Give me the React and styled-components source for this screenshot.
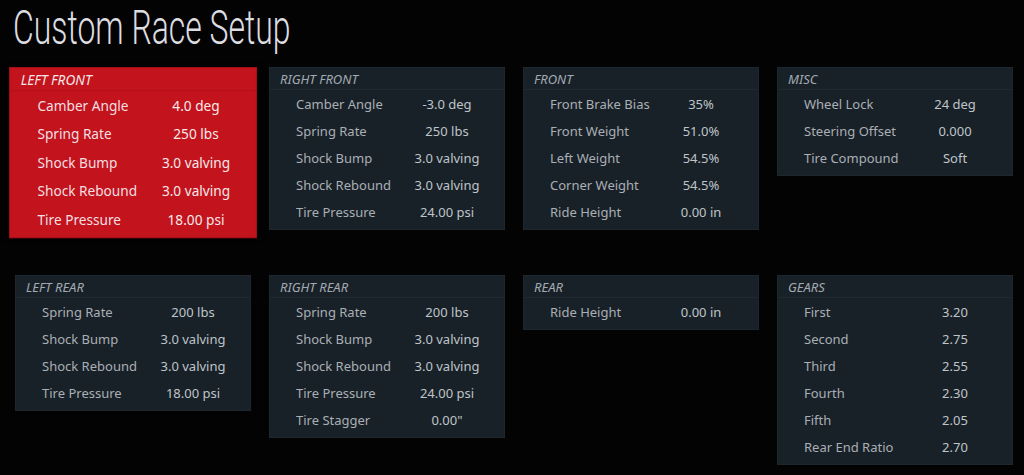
import React from "react";
import styled, { createGlobalStyle, css } from "styled-components";

const GlobalStyle = createGlobalStyle`
  html, body {
    margin: 0;
    padding: 0;
    background: #030303;
  }
  body {
    font-family: "Noto Sans", "Open Sans", sans-serif;
  }
`;

const panels = [
  {
    title: "LEFT FRONT",
    active: true,
    rows: [
      ["Camber Angle", "4.0 deg"],
      ["Spring Rate", "250 lbs"],
      ["Shock Bump", "3.0 valving"],
      ["Shock Rebound", "3.0 valving"],
      ["Tire Pressure", "18.00 psi"],
    ],
  },
  {
    title: "RIGHT FRONT",
    rows: [
      ["Camber Angle", "-3.0 deg"],
      ["Spring Rate", "250 lbs"],
      ["Shock Bump", "3.0 valving"],
      ["Shock Rebound", "3.0 valving"],
      ["Tire Pressure", "24.00 psi"],
    ],
  },
  {
    title: "FRONT",
    rows: [
      ["Front Brake Bias", "35%"],
      ["Front Weight", "51.0%"],
      ["Left Weight", "54.5%"],
      ["Corner Weight", "54.5%"],
      ["Ride Height", "0.00 in"],
    ],
  },
  {
    title: "MISC",
    rows: [
      ["Wheel Lock", "24 deg"],
      ["Steering Offset", "0.000"],
      ["Tire Compound", "Soft"],
    ],
  },
  {
    title: "LEFT REAR",
    rows: [
      ["Spring Rate", "200 lbs"],
      ["Shock Bump", "3.0 valving"],
      ["Shock Rebound", "3.0 valving"],
      ["Tire Pressure", "18.00 psi"],
    ],
  },
  {
    title: "RIGHT REAR",
    rows: [
      ["Spring Rate", "200 lbs"],
      ["Shock Bump", "3.0 valving"],
      ["Shock Rebound", "3.0 valving"],
      ["Tire Pressure", "24.00 psi"],
      ["Tire Stagger", "0.00\""],
    ],
  },
  {
    title: "REAR",
    rows: [["Ride Height", "0.00 in"]],
  },
  {
    title: "GEARS",
    rows: [
      ["First", "3.20"],
      ["Second", "2.75"],
      ["Third", "2.55"],
      ["Fourth", "2.30"],
      ["Fifth", "2.05"],
      ["Rear End Ratio", "2.70"],
    ],
  },
];

const App = () => {
  return (
    <Screen>
      <GlobalStyle />
      <Header>
        <Title>Custom Race Setup</Title>
      </Header>
      <Grid>
        {panels.map((panel) => (
          <Panel key={panel.title} $active={panel.active}>
            <PanelTitle $active={panel.active}>{panel.title}</PanelTitle>
            <Rows>
              {panel.rows.map(([label, value]) => (
                <Row key={label}>
                  <Label $active={panel.active}>{label}</Label>
                  <Value $active={panel.active}>{value}</Value>
                </Row>
              ))}
            </Rows>
          </Panel>
        ))}
      </Grid>
    </Screen>
  );
};

export default App;

const Screen = styled.div`
  width: 1024px;
  height: 475px;
  background: #030303;
  overflow: hidden;
  box-sizing: border-box;
`;

const Header = styled.div`
  height: 67px;
  padding-left: 13px;
  box-sizing: border-box;
`;

const Title = styled.h1`
  display: inline-block;
  margin: 0;
  font-family: Roboto, "Liberation Sans", sans-serif;
  font-weight: 300;
  font-size: 48px;
  line-height: 56px;
  color: #dcdde0;
  transform: scaleX(0.665);
  transform-origin: left top;
  white-space: nowrap;
`;

const Grid = styled.div`
  display: grid;
  grid-template-columns: repeat(4, 236px);
  column-gap: 18px;
  row-gap: 45px;
  align-items: start;
  padding-left: 15px;
`;

const Panel = styled.div`
  background: #192128;
  border: 1px solid #1e272e;
  box-sizing: border-box;
  padding-bottom: 4px;

  ${(p) =>
    p.$active &&
    css`
      background: #c3131d;
      border-color: #a50f18;
      transform: scale(1.05);
      transform-origin: 50% 0;
      box-shadow: 0 0 6px rgba(0, 0, 0, 0.6);
    `}
`;

const PanelTitle = styled.div`
  height: 22px;
  line-height: 22px;
  padding-left: 10px;
  font-size: 13px;
  font-style: italic;
  color: ${(p) => (p.$active ? "#f4e6e7" : "#a3aab1")};
  border-bottom: 1px solid ${(p) => (p.$active ? "#b5121c" : "#20292f")};
  box-sizing: border-box;
`;

const Rows = styled.div`
  display: flex;
  flex-direction: column;
`;

const Row = styled.div`
  display: grid;
  grid-template-columns: 26px 100px 102px;
  height: 27px;
  align-items: center;
  font-size: 13px;

  &::before {
    content: "";
  }
`;

const Label = styled.span`
  color: ${(p) => (p.$active ? "#f2dfe0" : "#a9afb5")};
  white-space: nowrap;
`;

const Value = styled.span`
  text-align: center;
  color: ${(p) => (p.$active ? "#f6e8e9" : "#bfc4c9")};
  white-space: nowrap;
`;
